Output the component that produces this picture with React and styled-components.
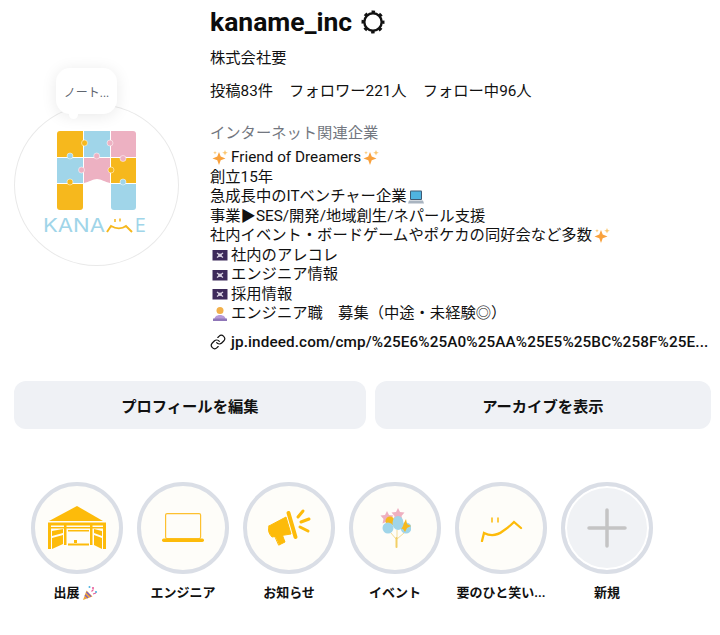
import React from "react";
import styled, { createGlobalStyle } from "styled-components";
import { Link as LinkIcon } from "lucide-react";

const FONT = `Roboto, "Noto Sans CJK JP", sans-serif`;

const GlobalStyle = createGlobalStyle`
  html, body {
    margin: 0;
    padding: 0;
    background: #fff;
    color: #111;
    font-family: ${FONT};
  }
`;

const Sparkle = () => (
  <svg viewBox="0 0 16 16">
    <path d="M7 2l1.700 4.600 4.800 1.900-4.800 1.800L7 15l-1.700-4.700L.5 8.500l4.800-1.900z" fill="#f9a13c" />
    <path d="M13 0l.8 2 2 .8-2 .8-.8 2-.8-2-2-.8 2-.8zM3 1l.5 1.300 1.300.5-1.300.5L3 4.600l-.5-1.300-1.300-.5 1.300-.5z" fill="#fbc66e" />
  </svg>
);

const Laptop = () => (
  <svg viewBox="0 0 16 16">
    <rect x="2" y="1.500" width="12" height="9.500" rx="1" fill="#3f5a74" />
    <rect x="3" y="2.500" width="10" height="7.500" fill="#4fb3e0" />
    <path d="M1 11.500h14l1 3H0z" fill="#a9b4c0" />
  </svg>
);

const PirateFlag = () => (
  <svg viewBox="0 0 16 16">
    <rect x="0.500" y="3" width="15" height="10.500" fill="#3d2a5a" />
    <path d="M5 6l6 4.500M11 6l-6 4.500" stroke="#d8d2e2" strokeWidth="1.300" />
    <circle cx="8" cy="8.200" r="1.700" fill="#d8d2e2" />
  </svg>
);

const Technologist = () => (
  <svg viewBox="0 0 16 16">
    <circle cx="8" cy="4.500" r="3.500" fill="#f2b04a" />
    <path d="M2 15c0-4 2.500-6 6-6s6 2 6 6z" fill="#b79ad8" />
    <rect x="1" y="12.500" width="14" height="2.500" fill="#8f76b8" />
  </svg>
);

const Popper = () => (
  <svg viewBox="0 0 16 16">
    <path d="M1 15l3.500-9.500 6 6z" fill="#f0a53a" />
    <path d="M3 10l3 3M4.500 7l4.500 4.500" stroke="#7c5cc4" strokeWidth="1.200" />
    <circle cx="11" cy="3" r="1.100" fill="#e8609a" />
    <circle cx="14" cy="7" r="1.100" fill="#4fb3e0" />
    <circle cx="7.500" cy="2" r="1" fill="#4fb3e0" />
    <path d="M9.500 6.500l2-2M11 9l3-1" stroke="#e8609a" strokeWidth="1.100" />
  </svg>
);

const YELLOW = "#f6b81d";
const BLUE = "#a0d5e9";
const PINK = "#edb1c2";

const pieceTabs = [
  { x: 84.5, y: 144, fill: YELLOW },
  { x: 110, y: 144, fill: PINK },
  { x: 70, y: 157, fill: BLUE },
  { x: 96.700, y: 157, fill: PINK },
  { x: 123, y: 159.500, fill: PINK },
  { x: 81.500, y: 171, fill: PINK },
  { x: 111, y: 171, fill: YELLOW },
  { x: 70, y: 183, fill: YELLOW },
  { x: 123, y: 183, fill: BLUE },
];

const KanameLogo = () => (
  <svg viewBox="14 105 165 165" width="165" height="165">
    <path d="M60 132h23v26H57v-23a3 3 0 0 1 3-3z" fill={YELLOW} />
    <rect x="84" y="132" width="26" height="26" fill={BLUE} />
    <path d="M111 132h22a3 3 0 0 1 3 3v23h-25z" fill={PINK} />
    <rect x="57" y="159" width="26" height="25" fill={BLUE} />
    <path d="M84 159h26v25c-5-1-9-4-13-4s-8 3-13 4z" fill={PINK} />
    <rect x="111" y="159" width="25" height="25" fill={YELLOW} />
    <path d="M57 185h26v23a3 3 0 0 1-3 3H60a3 3 0 0 1-3-3z" fill={YELLOW} />
    <path d="M111 185h25v23a3 3 0 0 1-3 3h-19a3 3 0 0 1-3-3z" fill={BLUE} />
    {pieceTabs.map((tab) => (
      <circle key={`${tab.x}-${tab.y}`} cx={tab.x} cy={tab.y} r="3" fill={tab.fill} stroke="#fff" strokeWidth="0.500" />
    ))}
    <text x="43" y="233" fontFamily="Inter, sans-serif" fontSize="18" textLength="62" lengthAdjust="spacingAndGlyphs" fill={BLUE}>KANA</text>
    <path d="M107 233l4-6c5 3 11 3 15 0l6 6" fill="none" stroke={YELLOW} strokeWidth="2" />
    <path d="M115 220v3M120 219.500v3" stroke={YELLOW} strokeWidth="1.500" />
    <text x="135" y="233" fontFamily="Inter, sans-serif" fontSize="18" fill={BLUE}>E</text>
  </svg>
);

const VerifiedMark = () => (
  <svg viewBox="0 0 24 24" width="24" height="24" fill="none" stroke="#111">
    <circle cx="12" cy="12" r="8.700" strokeWidth="2.400" />
    <circle cx="12" cy="12" r="10.300" strokeWidth="2.400" strokeDasharray="3.500 4.590" strokeDashoffset="1.750" />
  </svg>
);

const TentIcon = () => (
  <svg viewBox="49 505 58 46" width="58" height="46" fill="#fdbb0a">
    <path d="M78 506l26 15H50z" />
    <rect x="49" y="522.500" width="58" height="3" />
    <rect x="52" y="527" width="52" height="1.500" />
    <rect x="49" y="525" width="3" height="24" />
    <rect x="65" y="525" width="2.500" height="20" />
    <rect x="91" y="525" width="2.500" height="20" />
    <rect x="104" y="525" width="3" height="24" />
    <path d="M53 531l11-2v4l-11 3zM53 538l11-3v9l-11 5zM95 529l8 2v5l-8-3zM95 535l8 3v11l-8-4z" />
    <rect x="69" y="530" width="21" height="1.500" />
    <rect x="69" y="543.500" width="21" height="2" />
    <rect x="75" y="540" width="3" height="3" />
  </svg>
);

const LaptopIcon = () => (
  <svg viewBox="0 0 42 29" width="42" height="29" fill="none">
    <rect x="3.600" y="0.600" width="35" height="25" rx="1.500" stroke="#fdc02f" strokeWidth="1.200" />
    <rect x="0" y="25.500" width="42" height="3.500" rx="1.700" fill="#fdbb0a" />
  </svg>
);

const MegaphoneIcon = () => (
  <svg viewBox="266 508 46 40" width="46" height="40" fill="#fdbb0a" stroke="#fdbb0a" strokeLinecap="round" strokeLinejoin="round">
    <path d="M269 526l17-9 5 17-19 3q-5-5-3-11z" strokeWidth="1" />
    <path d="M275 536l7-2 3 8-6 3z" strokeWidth="1" />
    <path d="M288.500 513l7 24" strokeWidth="4" fill="none" />
    <path d="M298 517l5-6M301 522l8-3M300 527l8 4" strokeWidth="3" fill="none" />
  </svg>
);

const BalloonsIcon = () => (
  <svg viewBox="379 508 32 40" width="32" height="40">
    <path d="M387 511l2 4 4.500.5-3 3.500 1 4.500-4.500-2-4.500 2 1-4.500-3-3.500 4.500-.5z" fill="#eeb0c0" />
    <path d="M398 508l2 4 4.500.5-3 3.500 1 4.500-4.500-2-4.500 2 1-4.500-3-3.500 4.500-.5z" fill="#eeb0c0" />
    <circle cx="390" cy="521" r="4.500" fill={YELLOW} />
    <circle cx="388" cy="528" r="5.500" fill={BLUE} />
    <circle cx="406" cy="528" r="5.500" fill={BLUE} />
    <path d="M406 519l1 5 4 2-4 2-2 4-2-3-4-1 4-3z" fill={YELLOW} />
    <ellipse cx="398" cy="523" rx="5.500" ry="7" fill={BLUE} />
    <path d="M391 533l5 6M397 530v9M404 533l-7 6" stroke="#f3dc9a" strokeWidth="1" fill="none" />
    <path d="M396.500 538v9" stroke="#f2cf66" strokeWidth="2" strokeLinecap="round" />
  </svg>
);

const SmileIcon = () => (
  <svg viewBox="479 514 44 28" width="44" height="28" fill="none" stroke="#fdbb0a" strokeWidth="2.300" strokeLinecap="round">
    <path d="M482 541l2-8q10 5 19-2 6-4 11-9l7 6" />
    <path d="M492 518v4M498 518v4" strokeWidth="1.500" />
  </svg>
);

const PlusIcon = () => (
  <svg viewBox="0 0 40 40" width="40" height="40" stroke="#c4c4c4" strokeWidth="3.500" strokeLinecap="round">
    <path d="M20 2v36M2 20h36" />
  </svg>
);

const highlights = [
  { label: "出展", icon: <TentIcon />, emoji: <Popper /> },
  { label: "エンジニア", icon: <LaptopIcon /> },
  { label: "お知らせ", icon: <MegaphoneIcon /> },
  { label: "イベント", icon: <BalloonsIcon /> },
  { label: "要のひと笑い...", icon: <SmileIcon /> },
  { label: "新規", icon: <PlusIcon />, isNew: true },
];

const App = () => {
  return (
    <Page>
      <GlobalStyle />
      <Header>
        <AvatarColumn>
          <Note>ノート...</Note>
          <Avatar>
            <KanameLogo />
          </Avatar>
        </AvatarColumn>
        <Info>
          <NameRow>
            <UserName>kaname_inc</UserName>
            <VerifiedMark />
          </NameRow>
          <FullName>株式会社要</FullName>
          <Stats>
            <span>投稿83件</span>
            <span>フォロワー221人</span>
            <span>フォロー中96人</span>
          </Stats>
          <Category>インターネット関連企業</Category>
          <Bio>
            <BioLine><Emoji><Sparkle /></Emoji>Friend of Dreamers<Emoji><Sparkle /></Emoji></BioLine>
            <BioLine>創立15年</BioLine>
            <BioLine>急成長中のITベンチャー企業<Emoji><Laptop /></Emoji></BioLine>
            <BioLine>事業▶SES/開発/地域創生/ネパール支援</BioLine>
            <BioLine>社内イベント・ボードゲームやポケカの同好会など多数<Emoji><Sparkle /></Emoji></BioLine>
            <BioLine><Emoji><PirateFlag /></Emoji>社内のアレコレ</BioLine>
            <BioLine><Emoji><PirateFlag /></Emoji>エンジニア情報</BioLine>
            <BioLine><Emoji><PirateFlag /></Emoji>採用情報</BioLine>
            <BioLine><Emoji><Technologist /></Emoji>エンジニア職　募集（中途・未経験◎）</BioLine>
          </Bio>
          <LinkRow>
            <LinkIcon size={16} strokeWidth={1.800} />
            <span>jp.indeed.com/cmp/%25E6%25A0%25AA%25E5%25BC%258F%25E...</span>
          </LinkRow>
        </Info>
      </Header>
      <Actions>
        <ActionButton $grow={352}>プロフィールを編集</ActionButton>
        <ActionButton $grow={336}>アーカイブを表示</ActionButton>
      </Actions>
      <Highlights>
        {highlights.map((item) => (
          <Highlight key={item.label}>
            <Ring $isNew={item.isNew}>{item.icon}</Ring>
            <Label>
              {item.label}
              {item.emoji && <Emoji>{item.emoji}</Emoji>}
            </Label>
          </Highlight>
        ))}
      </Highlights>
    </Page>
  );
};

export default App;

const Page = styled.div`
  width: 720px;
  height: 635px;
  overflow: hidden;
  padding: 6px 9px 0 14px;
  box-sizing: border-box;
`;
const Header = styled.header`
  display: flex;
  align-items: center;
  gap: 31px;
`;
const AvatarColumn = styled.div`
  position: relative;
  flex: none;
  width: 165px;
  margin-top: 13px;
`;
const Avatar = styled.div`
  width: 165px;
  height: 162px;
  border-radius: 50%;
  box-sizing: border-box;
  box-shadow: inset 0 0 0 1px #e9e9e9;
`;
const Note = styled.div`
  position: absolute;
  top: -36px;
  left: 42px;
  width: 61px;
  height: 46px;
  border-radius: 14px;
  background: #fff;
  box-shadow: 0 2px 16px rgba(0, 0, 0, 0.09);
  display: flex;
  align-items: center;
  justify-content: center;
  font-size: 12px;
  color: #5f6670;
  z-index: 1;
  &::after {
    content: "";
    position: absolute;
    left: 13px;
    bottom: -5px;
    width: 9px;
    height: 9px;
    border-radius: 50%;
    background: #fff;
  }
`;
const Info = styled.div`
  flex: 1;
  min-width: 0;
`;
const NameRow = styled.div`
  display: flex;
  align-items: center;
  gap: 9px;
`;
const UserName = styled.h1`
  margin: 0;
  font-size: 26.500px;
  line-height: 32px;
  font-weight: 700;
  color: #0c0c0c;
`;
const FullName = styled.div`
  margin-top: 10px;
  font-size: 15.300px;
  line-height: 20px;
`;
const Stats = styled.div`
  display: flex;
  gap: 16px;
  margin-top: 13px;
  font-size: 15.300px;
  line-height: 20px;
`;
const Category = styled.div`
  margin-top: 22px;
  font-size: 15.300px;
  line-height: 20px;
  color: #737780;
`;
const Bio = styled.div`
  margin-top: 5px;
  font-size: 15.300px;
`;
const BioLine = styled.div`
  line-height: 19.500px;
  white-space: nowrap;
  display: flex;
  align-items: center;
`;
const Emoji = styled.span`
  flex: none;
  display: inline-flex;
  width: 16px;
  height: 16px;
  margin: 0 3px 0 2px;
  & > svg {
    width: 16px;
    height: 16px;
  }
`;
const LinkRow = styled.div`
  display: flex;
  align-items: center;
  gap: 5px;
  margin-top: 8px;
  font-size: 15.300px;
  line-height: 20px;
  font-weight: 500;
  letter-spacing: 0.11px;
  white-space: nowrap;
`;
const Actions = styled.div`
  display: flex;
  gap: 9px;
  margin-top: 29px;
`;
const ActionButton = styled.button`
  flex: ${({ $grow }) => $grow} 1 0;
  height: 48px;
  border: 0;
  border-radius: 12px;
  background: #eff1f5;
  color: #111;
  font-family: ${FONT};
  font-size: 15.300px;
  font-weight: 700;
`;
const Highlights = styled.div`
  display: flex;
  gap: 14px;
  margin-top: 53px;
  padding-left: 17px;
`;
const Highlight = styled.div`
  width: 92px;
  display: flex;
  flex-direction: column;
  align-items: center;
  gap: 11px;
`;
const Ring = styled.div`
  width: 92px;
  height: 92px;
  box-sizing: border-box;
  border-radius: 50%;
  border: 4px solid #dadee6;
  background: ${({ $isNew }) => ($isNew ? "#f0f2f5" : "#fefdf9")};
  box-shadow: ${({ $isNew }) => ($isNew ? "inset 0 0 0 2px #fff" : "none")};
  display: flex;
  align-items: center;
  justify-content: center;
`;
const Label = styled.div`
  display: flex;
  align-items: center;
  font-size: 13px;
  line-height: 16px;
  font-weight: 700;
  white-space: nowrap;
`;
